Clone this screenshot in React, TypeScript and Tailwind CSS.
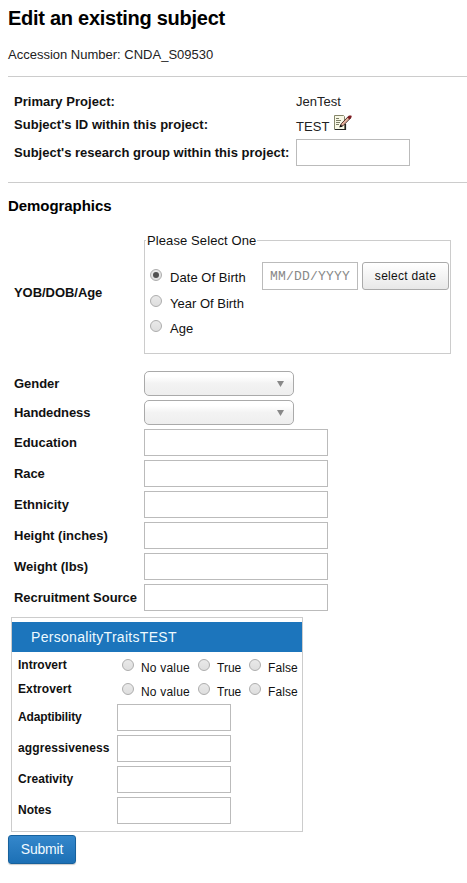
import React from "react";

const field = "box-border border border-[#bbb] bg-white outline-none";

function Radio({ checked = false }: { checked?: boolean }) {
  return (
    <span className="flex h-3 w-3 shrink-0 items-center justify-center rounded-full border border-[#adadad] bg-linear-to-b from-[#e9e9e9] to-[#dedede]">
      {checked && <span className="h-1.5 w-1.5 rounded-full bg-[#505050]" />}
    </span>
  );
}

function Option({ label, tracking, checked = false }: { label: string; tracking: string; checked?: boolean }) {
  return (
    <label className="flex items-start">
      <Radio checked={checked} />
      <span className={`ml-2 pt-px leading-[15px] ${tracking}`}>{label}</span>
    </label>
  );
}

function Row({ label, tracking }: { label: string; tracking: string }) {
  return (
    <div className="flex h-[31px] items-start">
      <span className={`w-[130px] shrink-0 font-bold leading-[27px] ${tracking}`}>{label}</span>
      <input aria-label={label} className={`h-[27px] w-[184px] ${field}`} />
    </div>
  );
}

function Select({ label, tracking }: { label: string; tracking: string }) {
  return (
    <div className="flex h-[29px] items-start">
      <span className={`w-[130px] shrink-0 font-bold leading-[25px] ${tracking}`}>{label}</span>
      <button aria-label={label} className="flex h-[25px] w-[150px] items-center justify-end rounded-[5px] border border-[#aaa] bg-linear-to-b from-white from-20% via-[#f3f3f3] via-50% to-[#eee] pr-[9px]">
        <svg width="7" height="6" viewBox="0 0 7 6"><path d="M0 0h7L3.5 6z" fill="#888" /></svg>
      </button>
    </div>
  );
}

function TraitChoice({ label, tracking }: { label: string; tracking: string }) {
  return (
    <div className="flex h-6 items-start">
      <span className={`w-[104px] shrink-0 text-[12px] font-bold leading-[14px] ${tracking}`}>{label}</span>
      <div className="flex pt-px text-[12px]">
        <div className="w-[76px]"><TraitOption label="No value" tracking="tracking-[0.2px]" /></div>
        <div className="w-[51px]"><TraitOption label="True" tracking="tracking-[0px]" /></div>
        <TraitOption label="False" tracking="tracking-[0.1px]" />
      </div>
    </div>
  );
}

function TraitOption({ label, tracking }: { label: string; tracking: string }) {
  return (
    <label className="flex items-start whitespace-nowrap">
      <Radio />
      <span className={`ml-[7px] pt-[2px] leading-[14px] ${tracking}`}>{label}</span>
    </label>
  );
}

function TraitField({ label, tracking }: { label: string; tracking: string }) {
  return (
    <div className="flex h-[31px] items-start">
      <span className={`w-[99px] shrink-0 text-[12px] font-bold leading-[26px] ${tracking}`}>{label}</span>
      <input aria-label={label} className={`h-[27px] w-[114px] ${field}`} />
    </div>
  );
}

export default function App() {
  return (
    <main className="h-[883px] w-[467px] overflow-hidden bg-white pl-2 font-['Liberation_Sans',Arial,sans-serif] text-[13px] text-[#111]">
      <h1 className="pt-[6px] text-[20px] font-bold leading-6 tracking-[-0.27px] text-black">Edit an existing subject</h1>
      <p className="mt-[17px] h-[29px] leading-4 tracking-[0px] text-[#222]">Accession Number: CNDA_S09530</p>
      <section className="h-[107px] border-y border-[#ccc] pl-[6px] pt-[17px]">
        <div className="flex h-[23px] leading-4">
          <span className="w-[282px] font-bold tracking-[0.03px]">Primary Project:</span>
          <span className="text-[#222]">JenTest</span>
        </div>
        <div className="flex h-[22px]">
          <span className="w-[282px] font-bold leading-4 tracking-[0.03px]">Subject's ID within this project:</span>
          <span className="w-[34px] pt-[2px] leading-4 tracking-[0.1px] text-[#222]">TEST</span>
          <svg className="-mt-[2px] ml-[4px] shrink-0" width="19" height="17" viewBox="0 0 19 17">
            <path d="M.5.5h9l1 1v13H.5z" fill="#f8f8e6" stroke="#85866a" />
            <path d="M2 3.5h3M2 5.5h5M2 7.5h4M2 9.5h3" stroke="#7b7d65" />
            <path d="M1 14.5h10.5V9" fill="none" stroke="#222" strokeWidth="1.2" />
            <path d="M6 11.5 7.5 8.5 14.5 1.3l2 1.8-7.3 7.5z" fill="#e5b09c" stroke="#3b211b" strokeWidth=".9" />
            <path d="m13.3 2.6 2-2h2l.5 1.5-2.3 2.5z" fill="#7e1c22" />
            <path d="m5.4 12.5 1-3 2.2 2z" fill="#111" />
          </svg>
        </div>
        <div className="flex">
          <span className="w-[282px] font-bold leading-[28px] tracking-[0.015px]">Subject's research group within this project:</span>
          <input aria-label="Research group" className={`h-[27px] w-[114px] ${field}`} />
        </div>
      </section>
      <h2 className="mt-[14px] h-[26px] text-[15px] font-bold leading-[18px] tracking-[-0.06px] text-black">Demographics</h2>

      <section className="flex h-[148px] pl-[6px]">
        <span className="w-[130px] shrink-0 pt-[62px] font-bold leading-4 tracking-[-0.05px]">YOB/DOB/Age</span>
        <fieldset className="mt-[9px] h-[122px] w-[307px] border border-[#ccc]">
          <legend className="ml-px px-px leading-4 tracking-[0.1px]"><span className="relative top-px">Please Select One</span></legend>
          <div className="flex h-[47px] pl-[5px] pt-[14px]">
            <div className="w-[112px] shrink-0 pt-[7px]"><Option label="Date Of Birth" tracking="tracking-[0.05px]" checked /></div>
            <input aria-label="Date of birth" placeholder="MM/DD/YYYY" className={`h-[28px] w-[96px] px-[7px] font-['Liberation_Mono',monospace] text-[13px] tracking-[0.2px] placeholder:text-[#888] ${field}`} />
            <button className="ml-1 h-[28px] w-[87px] rounded-[3px] border border-[#aaa] bg-linear-to-b from-white to-[#e8e8e8] text-[12px] tracking-[0.3px]">select date</button>
          </div>
          <div className="flex h-[25px] pl-[5px]"><Option label="Year Of Birth" tracking="tracking-[0px]" /></div>
          <div className="flex pl-[5px]"><Option label="Age" tracking="tracking-[0px]" /></div>
        </fieldset>
      </section>

      <section className="h-[246px] pl-[6px]">
        <Select label="Gender" tracking="tracking-[-0.05px]" />
        <Select label="Handedness" tracking="tracking-[-0.1px]" />
        <Row label="Education" tracking="tracking-[0px]" />
        <Row label="Race" tracking="tracking-[-0.1px]" />
        <Row label="Ethnicity" tracking="tracking-[0px]" />
        <Row label="Height (inches)" tracking="tracking-[0px]" />
        <Row label="Weight (lbs)" tracking="tracking-[0px]" />
        <Row label="Recruitment Source" tracking="tracking-[-0.03px]" />
      </section>

      <section className="ml-[3px] h-[215px] w-[292px] border border-[#ccc] pt-1">
        <h3 className="h-[30px] bg-[#1c75bc] pl-[19px] text-[14px] leading-[30px] tracking-[0.3px] text-[#eefaff]">PersonalityTraitsTEST</h3>
        <div className="pl-[6px] pt-[6px]">
          <TraitChoice label="Introvert" tracking="tracking-[0px]" />
          <TraitChoice label="Extrovert" tracking="tracking-[0.1px]" />
          <div className="-mt-[2px]">
            <TraitField label="Adaptibility" tracking="tracking-[-0.15px]" />
            <TraitField label="aggressiveness" tracking="tracking-[0.1px]" />
            <TraitField label="Creativity" tracking="tracking-[0.05px]" />
            <TraitField label="Notes" tracking="tracking-[0px]" />
          </div>
        </div>
      </section>
      <button className="mt-[3px] block h-[29px] w-[68px] rounded-[3px] border border-[#17619c] bg-linear-to-b from-[#3487cb] to-[#1c70b5] text-[14px] tracking-[-0.2px] text-[#f0faff] shadow-[0_1px_1px_#ccc]">Submit</button>
    </main>
  );
}
